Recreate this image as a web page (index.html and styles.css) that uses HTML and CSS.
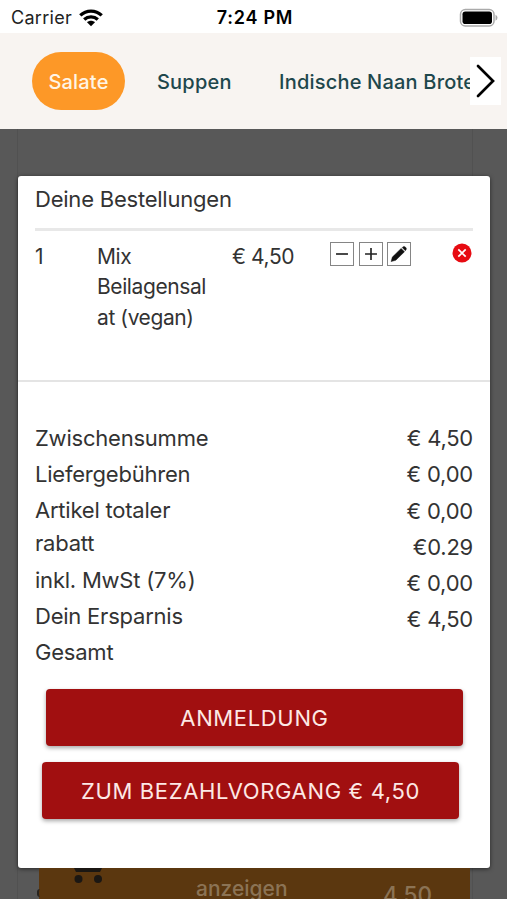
FILE: index.html
```html
<!DOCTYPE html>
<html lang="de">
<head>
<meta charset="utf-8">
<title>Deine Bestellungen</title>
<link rel="stylesheet" href="styles.css">
</head>
<body>
<div class="phone">
  <header class="status">
    <div class="carrier"><span>Carrier</span>
      <svg width="24" height="18" viewBox="0 0 24 18"><g fill="none" stroke="#000" stroke-width="3.3"><path d="M1.3 6.4C7.3.6 16.700 .6 22.700 6.400"/><path d="M5.200 10.500C9 7 15 7 18.800 10.500"/></g><path d="M12 17.300L8 13.300C10.300 11.300 13.700 11.300 16 13.300Z"/></svg>
    </div>
    <span class="time">7:24 PM</span>
    <svg class="battery" width="40" height="20" viewBox="0 0 40 20"><rect x="1.500" y="1.500" width="33.500" height="16.500" rx="4.800" fill="#fff" stroke="#aaa" stroke-width="1.500"/><rect x="3.500" y="3.500" width="29.500" height="12.500" rx="2.800"/><path d="M36.500 6.800Q38.500 8 38.500 9.800T36.500 12.800Z" fill="#aaa"/></svg>
  </header>
  <nav class="tabs">
    <span class="tab active">Salate</span>
    <span class="tab soup">Suppen</span>
    <span class="tab naan">Indische Naan Brote</span>
    <button class="next" aria-label="Weiter"><svg width="31" height="48" viewBox="0 0 31 48"><path d="M8 9L23 24L8 39" fill="none" stroke="#000" stroke-width="2.700" stroke-linecap="round"/></svg></button>
  </nav>
  <main class="backdrop">
    <section class="modal">
      <h1>Deine Bestellungen</h1>
      <div class="item">
        <span>1</span>
        <span class="name">Mix<br>Beilagensal<br>at (vegan)</span>
        <span class="price">€ 4,50</span>
        <div class="tools">
          <button aria-label="Weniger"><svg viewBox="0 0 24 24"><path d="M5.500 12H18.500" stroke="#222" stroke-width="1.800"/></svg></button>
          <button aria-label="Mehr"><svg viewBox="0 0 24 24"><path d="M5.500 12H18.500M12 5.500V18.500" stroke="#222" stroke-width="1.800"/></svg></button>
          <button aria-label="Bearbeiten"><svg viewBox="0 0 24 24"><path d="M3.400 20.300L4.700 15.400L14.300 5.900L18 9.500L8.500 18.800ZM15.500 5L16.600 4Q17.800 3.200 19.100 4.500Q20.600 5.900 19.700 7.300L18.900 8.400Z" fill="#111" stroke="#111" stroke-width=".5" stroke-linejoin="round"/></svg></button>
        </div>
        <svg class="remove" width="20" height="20" viewBox="0 0 20 20"><circle cx="10" cy="10" r="9.500" fill="#e70b12"/><path d="M6.300 6.300L13.700 13.700M13.700 6.300L6.300 13.700" stroke="#fff" stroke-width="1.700"/></svg>
      </div>
      <div class="totals">
        <div class="labels">
          <span class="l1">Zwischensumme</span>
          <span class="l2">Liefergebühren</span>
          <span class="l3">Artikel totaler<br>rabatt</span>
          <span class="l4">inkl. MwSt (7%)</span>
          <span class="l5">Dein Ersparnis</span>
          <span class="l6">Gesamt</span>
        </div>
        <div class="values">
          <span>€ 4,50</span><span>€ 0,00</span><span>€ 0,00</span><span>€0.29</span><span>€ 0,00</span><span>€ 4,50</span>
        </div>
      </div>
      <div class="actions">
        <button class="login">ANMELDUNG</button>
        <button class="pay">ZUM BEZAHLVORGANG € 4,50</button>
      </div>
    </section>
    <footer class="cart">
      <svg width="30" height="16" viewBox="0 0 30 16"><path d="M1 0H29L27 4H3Z"/><circle cx="5.500" cy="11" r="4"/><circle cx="25" cy="11" r="4"/></svg>
      <span class="show">anzeigen</span>
      <span class="sum">4,50</span>
    </footer>
  </main>
</div>
</body>
</html>
```
FILE: styles.css
```css
* { box-sizing: border-box; }
body { margin: 0; background: #fff; font-family: Inter, "Liberation Sans", sans-serif; color: #333; }
button { font: inherit; border: 0; padding: 0; }
svg { display: block; flex: none; }
.phone { width: 507px; height: 900px; overflow: hidden; display: flex; flex-direction: column; }
.status { height: 33px; flex: none; display: grid; grid-template-columns: 1fr auto 1fr; align-items: center; padding: 2px 8px 0 11px; font-size: 18px; color: #222; }
.carrier { display: flex; align-items: center; gap: 7px; letter-spacing: .3px; }
.time { font-weight: 600; color: #000; letter-spacing: .75px; }
.battery { justify-self: end; }
.tabs { height: 96px; flex: none; background: #f8f4f1; display: flex; align-items: center; padding-left: 32px; position: relative; color: #1e474c; font-size: 20px; font-weight: 500; white-space: nowrap; letter-spacing: .2px; }
.tab { padding-top: 1px; }
.tab.active { width: 93px; height: 58px; border-radius: 29px; background: #fd9827; color: #fff5e5; display: flex; align-items: center; justify-content: center; }
.soup { margin-left: 32px; width: 75px; }
.naan { margin-left: 47px; }
.next { position: absolute; left: 470px; top: 24px; width: 31px; height: 48px; background: #fff; }
.backdrop { height: 770px; flex: none; background: linear-gradient(#515151, #515151) 17px 0 / 1px 100% no-repeat, linear-gradient(#515151, #515151) 472px 0 / 1px 100% no-repeat, #585858; padding: 47px 17px 0 18px; overflow: hidden; }
.modal { height: 692px; background: #fff; border-radius: 3px; box-shadow: 0 1px 4px rgba(0,0,0,.55); font-size: 22px; letter-spacing: -.22px; position: relative; }
h1 { margin: 0 17px; height: 55px; padding-top: 8px; border-bottom: 3px solid #e8e8e8; font-size: 22px; line-height: 30px; font-weight: 400; }
.item { height: 151px; border-bottom: 2px solid #e4e4e4; display: grid; grid-template-columns: 62px 135px 98px 80px 1fr; padding: 11px 17px 0; line-height: 30.300px; font-size: 21px; letter-spacing: -.4px; align-items: start; }
.tools { display: flex; gap: 4.500px; }
.tools button { width: 24px; height: 24px; border: 1.500px solid #858585; background: #fff; }
.tools svg { width: 22px; height: 22px; }
.remove { justify-self: end; margin: 1px 1px 0 0; }
.totals { height: 307px; padding: 41px 17px 0; display: flex; justify-content: space-between; line-height: 30.300px; }
.labels, .values { display: flex; flex-direction: column; gap: 6px; }
.l3 { line-height: 33.500px; margin-top: -2px; margin-bottom: -2px; }
.values { align-items: flex-end; }
.actions { display: flex; flex-direction: column; gap: 16px; }
.actions button { width: 417px; height: 57px; border-radius: 4px; background: #a10f10; color: #fde8e5; letter-spacing: .650px; box-shadow: 0 2px 4px rgba(0,0,0,.35); }
.login { margin-left: 28px; }
.pay { margin-left: 24px; }
.cart { height: 31px; margin: 0 20px 0 21px; background: #5b370f; color: #8b7355; display: flex; align-items: flex-start; font-size: 21px; font-weight: 500; line-height: 26px; position: relative; }
.cart::before { content: ""; position: absolute; left: -2px; top: 21px; width: 3px; height: 8px; border-left: 2px solid #28241f; border-radius: 3px 0 0 3px; }
.cart svg { margin-left: 34px; fill: #1b1713; }
.show { margin-left: 93px; padding-top: 8px; }
.sum { margin-left: auto; padding: 14px 38px 0 0; font-size: 22.500px; }
```
